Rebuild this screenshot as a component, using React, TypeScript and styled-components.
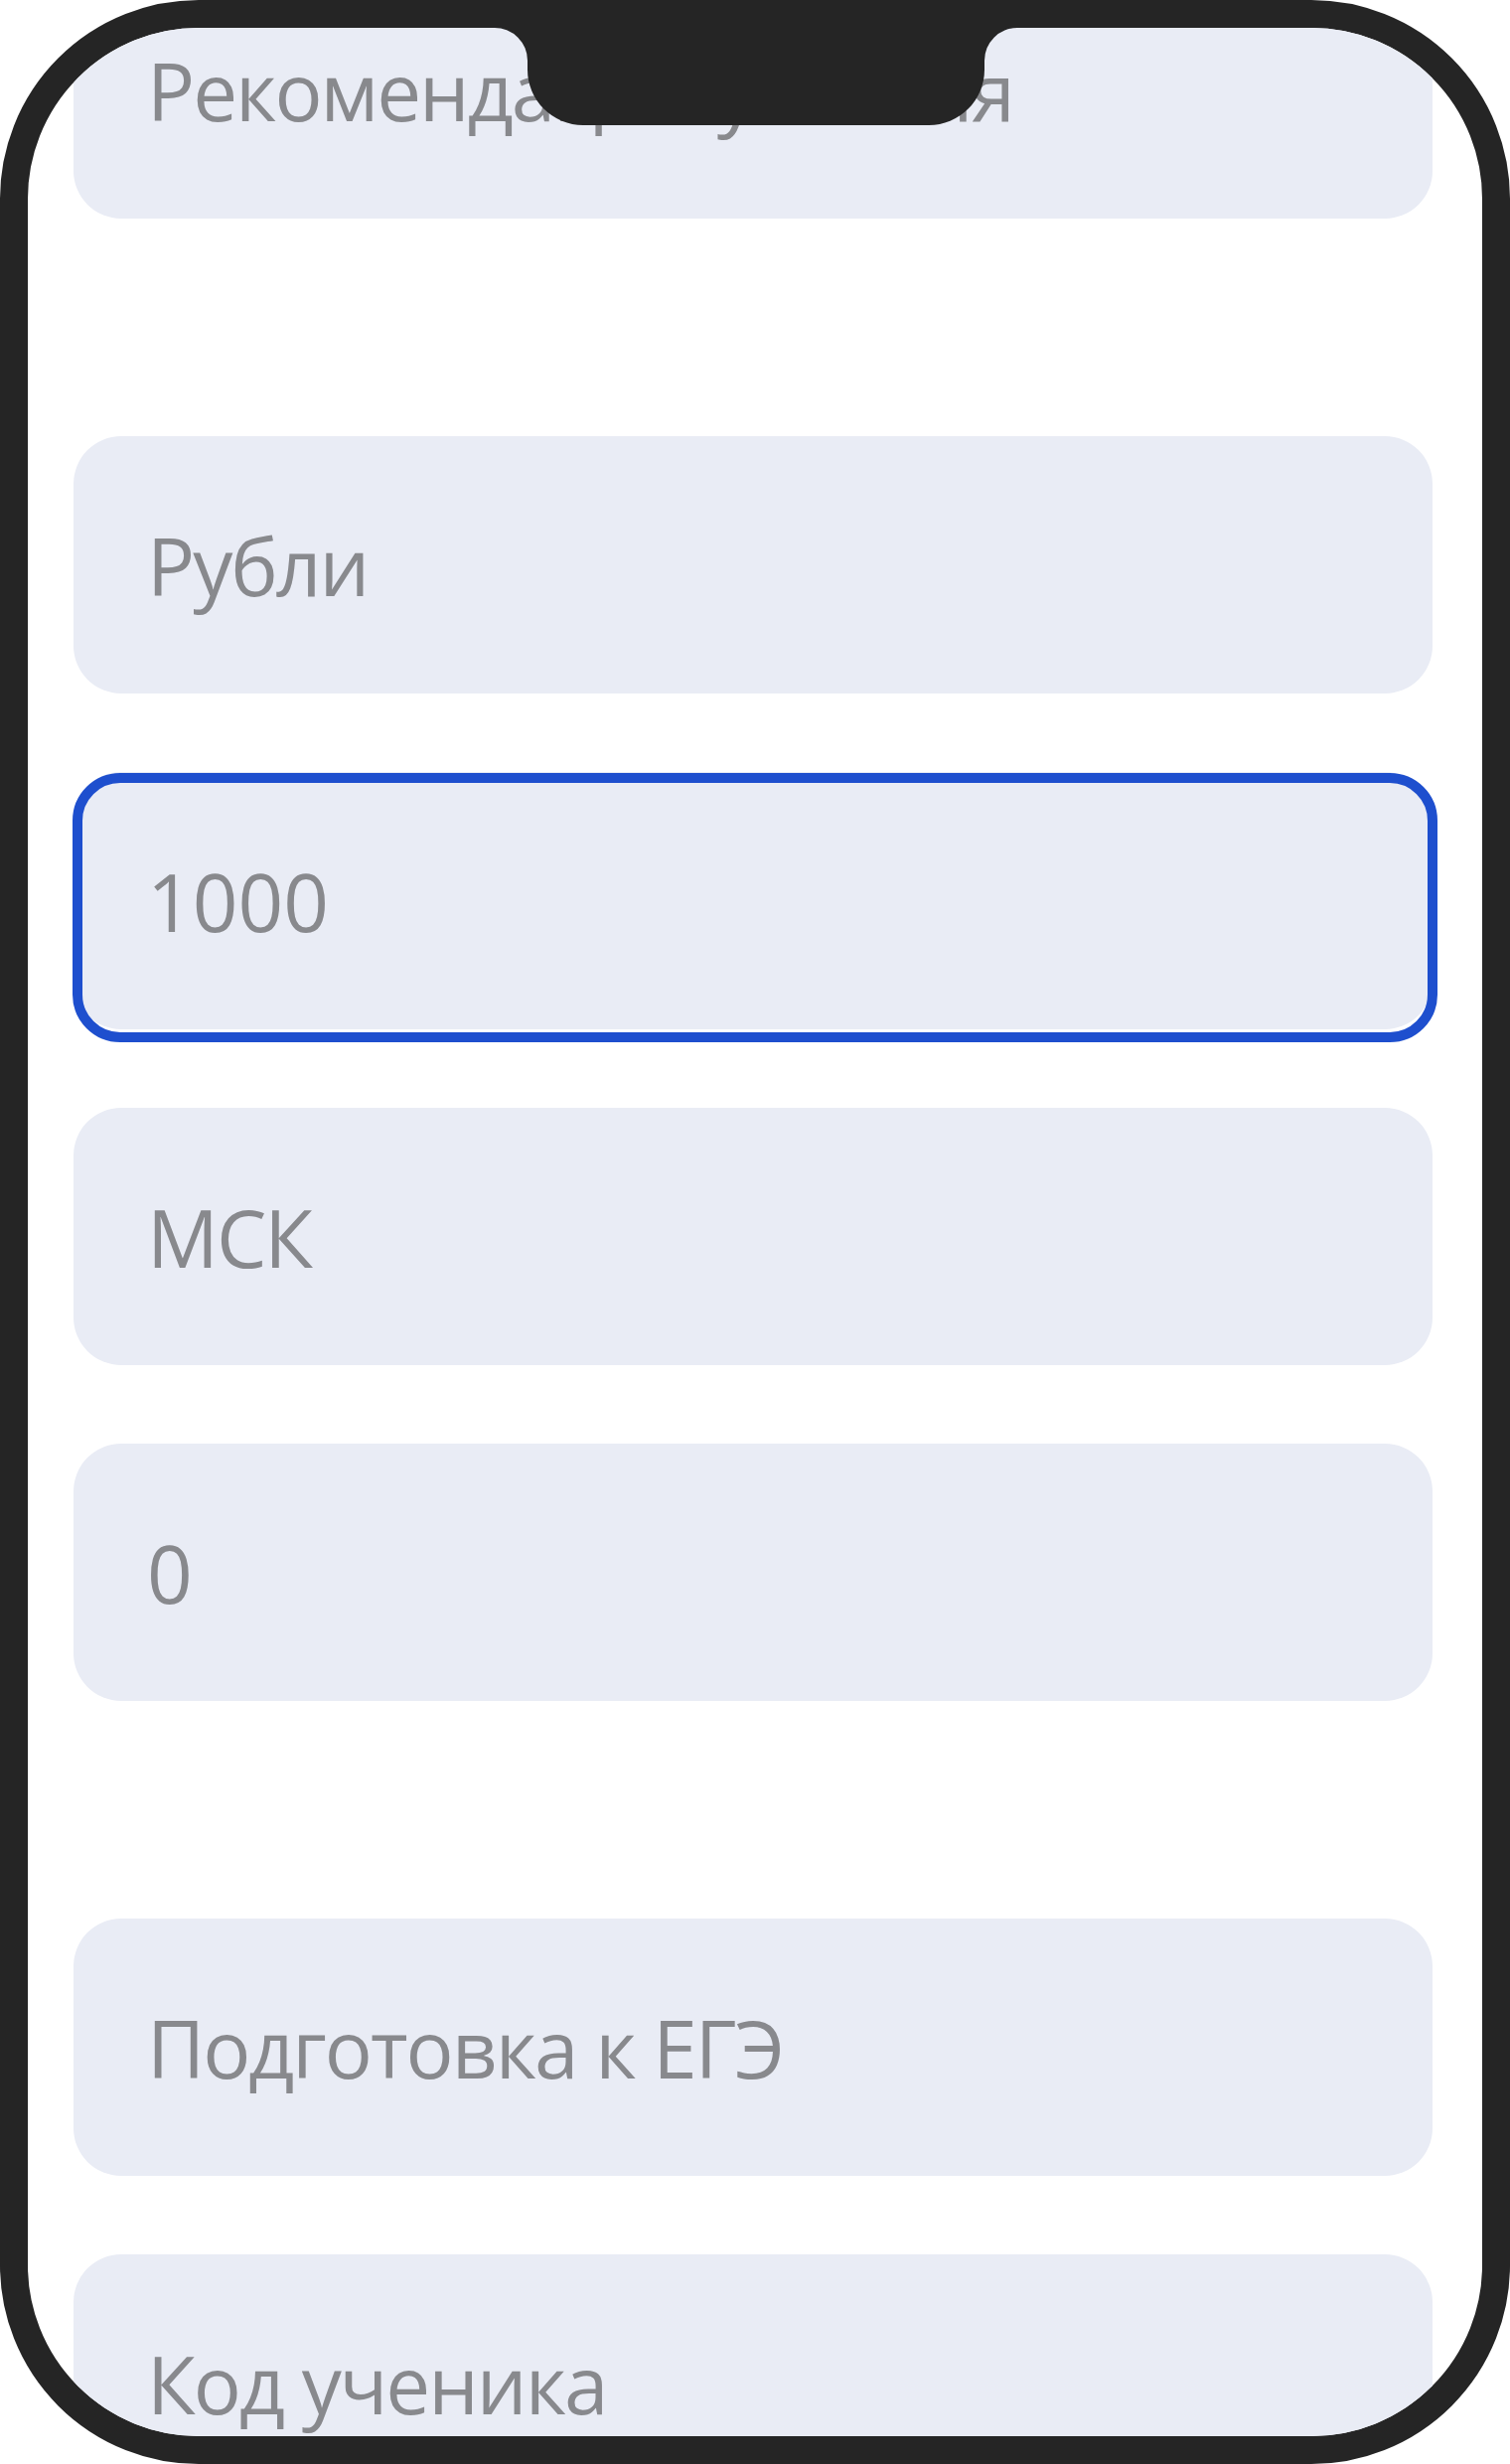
import React from "react";
import styled, { createGlobalStyle, css } from "styled-components";

const GlobalStyle = createGlobalStyle`
  html, body {
    margin: 0;
    padding: 0;
    background: #ffffff;
  }
  body {
    font-family: "Open Sans", "Noto Sans", sans-serif;
  }
`;

const Phone = styled.div`
  position: relative;
  box-sizing: border-box;
  width: 1520px;
  height: 2480px;
  border: 28px solid #252525;
  border-radius: 200px;
  background: #ffffff;
  overflow: hidden;
`;

const Notch = styled.svg`
  position: absolute;
  top: 0;
  left: 432px;
  width: 600px;
  height: 98px;
  z-index: 2;
`;

const Screen = styled.div`
  display: flex;
  flex-direction: column;
  gap: 219px;
  padding: 0 50px 0 46px;
  margin-top: -67px;
`;

const Group = styled.div`
  display: flex;
  flex-direction: column;
  gap: 79px;
`;

const Field = styled.div<{ $focused?: boolean }>`
  position: relative;
  box-sizing: border-box;
  height: 259px;
  flex: 0 0 259px;
  border-radius: 48px;
  background: #e9ecf5;
  display: flex;
  align-items: center;
  padding: 0 0 0 74px;
  font-size: 80px;
  color: #88898d;
  white-space: nowrap;

  ${(p) =>
    p.$focused &&
    css`
      &::after {
        content: "";
        position: absolute;
        top: 1px;
        left: -1px;
        right: -5px;
        bottom: -13px;
        border: 10px solid #1e4fce;
        border-radius: 48px;
        pointer-events: none;
      }
    `}
`;

const Value = styled.span<{ $numeric?: boolean }>`
  display: block;
  letter-spacing: ${(p) => (p.$numeric ? "0" : "-2px")};
`;

type FieldData = { value: string; focused?: boolean; numeric?: boolean };

const groups: FieldData[][] = [
  [{ value: "Рекомендации учителя" }],
  [
    { value: "Рубли" },
    { value: "1000", focused: true, numeric: true },
    { value: "МСК" },
    { value: "0", numeric: true },
  ],
  [{ value: "Подготовка к ЕГЭ" }, { value: "Код ученика" }],
];

export default function App() {
  return (
    <>
      <GlobalStyle />
      <Phone>
        <Notch viewBox="460 28 600 98" aria-hidden="true">
          <path
            d="M 498 28 A 33 33 0 0 1 531 61 L 531 70 A 56 56 0 0 0 587 126 L 935 126 A 56 56 0 0 0 991 70 L 991 61 A 33 33 0 0 1 1024 28 Z"
            fill="#252525"
          />
        </Notch>
        <Screen>
          {groups.map((g, gi) => (
            <Group key={gi}>
              {g.map((f, fi) => (
                <Field key={fi} $focused={f.focused}>
                  <Value $numeric={f.numeric}>{f.value}</Value>
                </Field>
              ))}
            </Group>
          ))}
        </Screen>
      </Phone>
    </>
  );
}
